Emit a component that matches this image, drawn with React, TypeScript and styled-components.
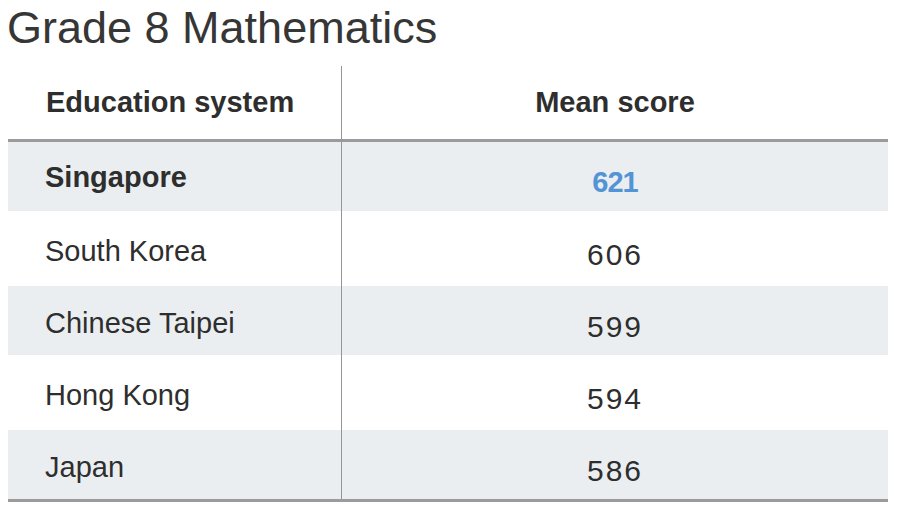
import React from 'react';
import styled, { createGlobalStyle } from 'styled-components';

const GlobalStyle = createGlobalStyle`
	*, *::before, *::after {
		box-sizing: border-box;
	}
	html, body {
		margin: 0;
		padding: 0;
		background: #ffffff;
	}
	body {
		font-family: 'Liberation Sans', Arial, sans-serif;
		color: #2e2e2e;
	}
`;

const Page = styled.div`
	width: 901px;
	height: 517px;
	padding: 5px 13px 0 8px;
	overflow: hidden;
`;

const Title = styled.h1`
	margin: 0 0 15px -1px;
	font-size: 45px;
	line-height: 46px;
	font-weight: 400;
	color: #363636;
`;

const Table = styled.div`
	display: grid;
	grid-template-columns: 334px 1fr;
	border-bottom: 3px solid #9b9b9b;
`;

const Row = styled.div<{ $striped?: boolean; $head?: boolean }>`
	display: contents;

	& > div {
		height: ${({ $head, $striped }) => ($head ? '76px' : $striped ? '69px' : '75px')};
		background: ${({ $striped }) => ($striped ? '#ebeef0' : '#ffffff')};
		border-bottom: ${({ $head }) => ($head ? '3px solid #9b9b9b' : 'none')};
	}
`;

const NameCell = styled.div<{ $bold?: boolean }>`
	display: flex;
	align-items: center;
	padding: ${({ $bold }) => ($bold ? '2px' : '5px')} 0 0 37px;
	border-right: 1.5px solid #959595;
	font-size: 29px;
	font-weight: ${({ $bold }) => ($bold ? 700 : 400)};
`;

const ScoreCell = styled.div<{ $bold?: boolean; $highlight?: boolean }>`
	display: flex;
	align-items: center;
	justify-content: center;
	padding-top: 12px;
	font-size: ${({ $bold }) => ($bold ? '29px' : '30px')};
	letter-spacing: ${({ $bold }) => ($bold ? '-1px' : '2px')};
	font-weight: ${({ $bold }) => ($bold ? 700 : 400)};
	color: ${({ $highlight }) => ($highlight ? '#5294d6' : '#2e2e2e')};
`;

const HeadName = styled(NameCell)`
	padding: 0 0 0 38px;
	font-weight: 700;
`;

const HeadScore = styled(ScoreCell)`
	padding-top: 0;
	letter-spacing: 0;
	font-size: 29px;
	font-weight: 700;
`;

const rows = [
	{ name: 'Singapore', score: 621, top: true },
	{ name: 'South Korea', score: 606 },
	{ name: 'Chinese Taipei', score: 599 },
	{ name: 'Hong Kong', score: 594 },
	{ name: 'Japan', score: 586 },
];

const App = () => (
	<>
		<GlobalStyle />
		<Page>
			<Title>Grade 8 Mathematics</Title>
			<Table>
				<Row $head>
					<HeadName>Education system</HeadName>
					<HeadScore>Mean score</HeadScore>
				</Row>
				{rows.map((row, i) => (
					<Row key={row.name} $striped={i % 2 === 0}>
						<NameCell $bold={row.top}>{row.name}</NameCell>
						<ScoreCell $bold={row.top} $highlight={row.top}>
							{row.score}
						</ScoreCell>
					</Row>
				))}
			</Table>
		</Page>
	</>
);

export default App;
